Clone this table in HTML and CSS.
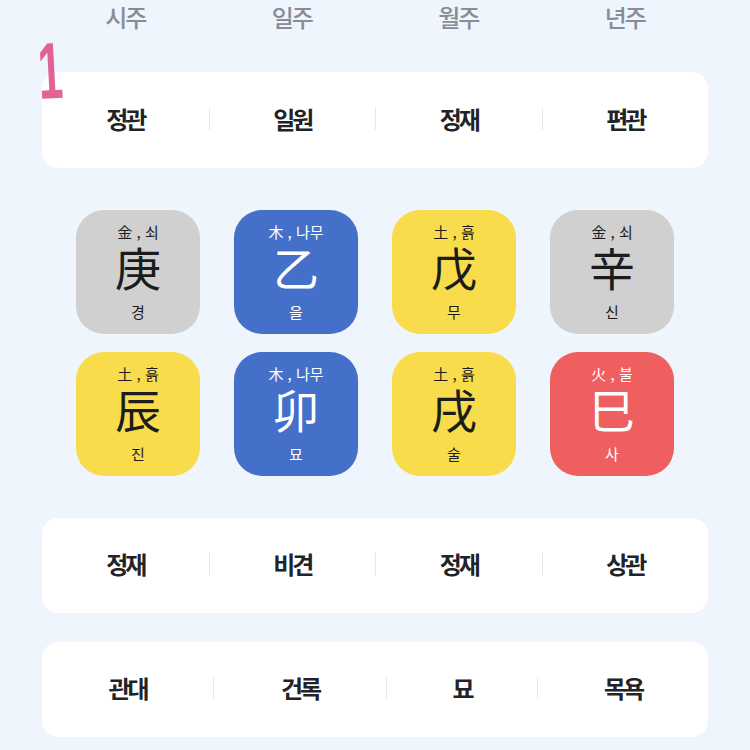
FILE: index.html
```html
<!DOCTYPE html>
<html lang="ko">
<head>
<meta charset="utf-8">
<link rel="stylesheet" href="styles.css">
</head>
<body>
<div class="page">
  <div class="heads">
    <div>시주</div><div>일주</div><div>월주</div><div>년주</div>
  </div>
  <div class="mark">1</div>
  <div class="card first">
    <div class="cell">정관</div><div class="cell">일원</div><div class="cell">정재</div><div class="cell">편관</div>
  </div>
  <div class="tiles">
    <div class="tile metal"><span class="top">金 , 쇠</span><span class="han">庚</span><span class="bot">경</span></div>
    <div class="tile wood"><span class="top">木 , 나무</span><span class="han">乙</span><span class="bot">을</span></div>
    <div class="tile earth"><span class="top">土 , 흙</span><span class="han">戊</span><span class="bot">무</span></div>
    <div class="tile metal"><span class="top">金 , 쇠</span><span class="han">辛</span><span class="bot">신</span></div>
    <div class="tile earth"><span class="top">土 , 흙</span><span class="han">辰</span><span class="bot">진</span></div>
    <div class="tile wood"><span class="top">木 , 나무</span><span class="han">卯</span><span class="bot">묘</span></div>
    <div class="tile earth"><span class="top">土 , 흙</span><span class="han">戌</span><span class="bot">술</span></div>
    <div class="tile fire"><span class="top">火 , 불</span><span class="han">巳</span><span class="bot">사</span></div>
  </div>
  <div class="card second">
    <div class="cell">정재</div><div class="cell">비견</div><div class="cell">정재</div><div class="cell">상관</div>
  </div>
  <div class="card third">
    <div class="cell">관대</div><div class="cell">건록</div><div class="cell">묘</div><div class="cell">목욕</div>
  </div>
</div>
</body>
</html>
```
FILE: styles.css
```css
* { box-sizing: border-box; }
html, body {
  margin: 0;
  padding: 0;
  background: #eff5fd;
  font-family: "Noto Sans CJK KR", "Noto Sans", sans-serif;
}
.page {
  position: relative;
  padding: 0 42px;
  height: 750px;
  overflow: hidden;
}
.heads {
  display: grid;
  grid-template-columns: repeat(4, 1fr);
  height: 30px;
  padding-top: 4px;
  line-height: 26px;
  font-size: 24px;
  font-weight: 500;
  color: #878c95;
  text-align: center;
  letter-spacing: -2px;
}
.mark {
  position: absolute;
  left: 36px;
  top: 32px;
  font-family: "Liberation Sans", sans-serif;
  font-weight: 700;
  font-size: 80px;
  line-height: 80px;
  color: #e2568e;
  opacity: 0.92;
  transform: rotate(-3deg) scaleX(0.55);
  transform-origin: left top;
}
.card {
  background: #ffffff;
  border-radius: 16px;
  display: grid;
  grid-template-columns: repeat(4, 1fr);
  align-items: center;
  height: 96px;
}
.card.first { margin-top: 42px; }
.card.second { margin-top: 42px; height: 95px; }
.card.third { margin-top: 29px; height: 95px; grid-template-columns: 171fr 173fr 151fr 171fr; }
.cell {
  text-align: center;
  font-size: 24px;
  font-weight: 700;
  color: #222327;
  line-height: 22px;
  letter-spacing: -3px;
  margin-top: -3px;
}
.cell + .cell { border-left: 1px solid #e4e8ee; }
.tiles {
  margin-top: 42px;
  display: grid;
  grid-template-columns: repeat(4, 124px);
  gap: 18px 34px;
  justify-content: center;
}
.tile {
  height: 124px;
  border-radius: 28px;
  display: flex;
  flex-direction: column;
  align-items: center;
  color: #1c1c1c;
}
.tile .top {
  margin-top: 13px;
  font-size: 15px;
  line-height: 18px;
}
.tile .han {
  margin-top: 2px;
  font-size: 46px;
  line-height: 46px;
}
.tile .bot {
  margin-top: 14px;
  font-size: 15px;
  line-height: 18px;
}
.metal { background: #d0d0d0; }
.wood { background: #4470c9; color: #ffffff; }
.earth { background: #f8dc4b; }
.fire { background: #ef5f5f; color: #ffffff; }
```
